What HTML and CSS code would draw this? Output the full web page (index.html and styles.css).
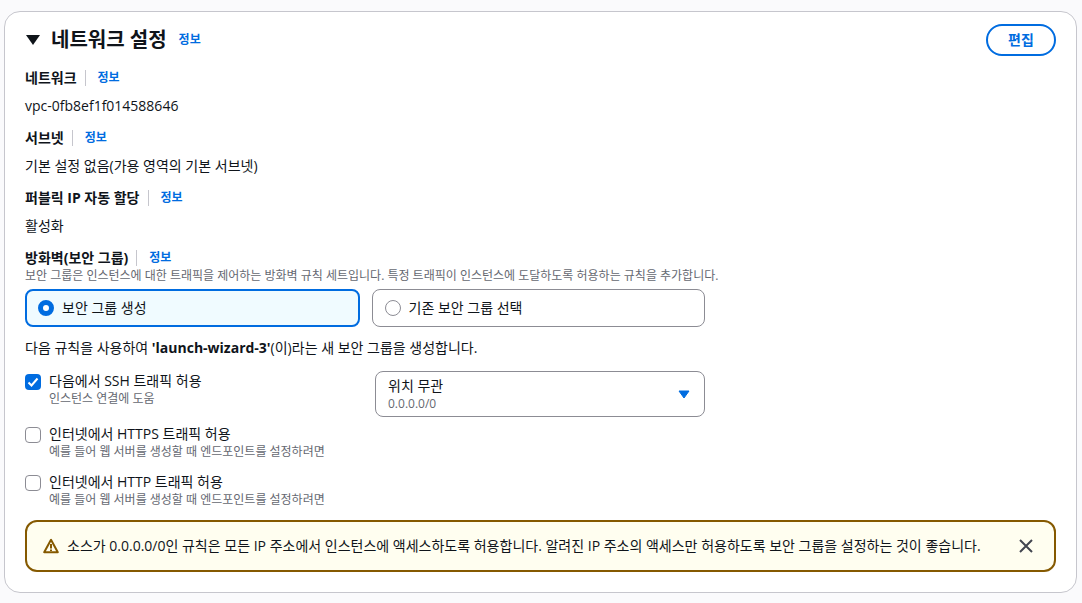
FILE: index.html
```html
<!DOCTYPE html>
<html lang="ko">
<head>
<meta charset="utf-8">
<title>네트워크 설정</title>
<link rel="stylesheet" href="styles.css">
</head>
<body>
<section class="card">
  <header class="head">
    <svg class="caret" width="14" height="10" viewBox="0 0 14 10"><path d="M0 0h14L7 10z" fill="#0f141a"/></svg>
    <h2 class="title">네트워크 설정</h2>
    <a class="info title-info">정보</a>
    <button class="edit">편집</button>
  </header>
  <div class="field">
    <div class="label"><b>네트워크</b><a class="info">정보</a></div>
    <div class="value">vpc-0fb8ef1f014588646</div>
  </div>
  <div class="field">
    <div class="label"><b>서브넷</b><a class="info">정보</a></div>
    <div class="value">기본 설정 없음(가용 영역의 기본 서브넷)</div>
  </div>
  <div class="field">
    <div class="label"><b>퍼블릭 IP 자동 할당</b><a class="info">정보</a></div>
    <div class="value">활성화</div>
  </div>
  <div class="label"><b>방화벽(보안 그룹)</b><a class="info">정보</a></div>
  <p class="desc">보안 그룹은 인스턴스에 대한 트래픽을 제어하는 방화벽 규칙 세트입니다. 특정 트래픽이 인스턴스에 도달하도록 허용하는 규칙을 추가합니다.</p>
  <div class="tiles">
    <div class="tile on"><span class="radio on"></span>보안 그룹 생성</div>
    <div class="tile"><span class="radio"></span>기존 보안 그룹 선택</div>
  </div>
  <p class="rule">다음 규칙을 사용하여 <b>'launch-wizard-3'</b>(이)라는 새 보안 그룹을 생성합니다.</p>
  <div class="ssh-row">
    <div class="check-item">
      <span class="box on"><svg width="16" height="16" viewBox="0 0 16 16"><path d="M3.5 8.5 6.5 11.5 12.5 4.5" fill="none" stroke="#fff" stroke-width="2"/></svg></span>
      <div><div class="check-label">다음에서 SSH 트래픽 허용</div><div class="check-desc">인스턴스 연결에 도움</div></div>
    </div>
    <div class="select">
      <div><div class="sel-main">위치 무관</div><div class="sel-sub">0.0.0.0/0</div></div>
      <svg width="12" height="9" viewBox="0 0 12 9"><path d="M1 1h10L6 8z" fill="#006ce0" stroke="#006ce0"/></svg>
    </div>
  </div>
  <div class="check-item spaced">
    <span class="box"></span>
    <div><div class="check-label">인터넷에서 HTTPS 트래픽 허용</div><div class="check-desc">예를 들어 웹 서버를 생성할 때 엔드포인트를 설정하려면</div></div>
  </div>
  <div class="check-item spaced2">
    <span class="box"></span>
    <div><div class="check-label">인터넷에서 HTTP 트래픽 허용</div><div class="check-desc">예를 들어 웹 서버를 생성할 때 엔드포인트를 설정하려면</div></div>
  </div>
  <div class="alert">
    <svg class="warn" width="16" height="16" viewBox="0 0 16 16"><path d="M8 1.8 1.2 14.2h13.6z" fill="none" stroke="#855900" stroke-width="2" stroke-linejoin="round"/><path d="M8 6v4.5M8 11.5v1.5" stroke="#855900" stroke-width="2" fill="none"/></svg>
    <span class="alert-text">소스가 0.0.0.0/0인 규칙은 모든 IP 주소에서 인스턴스에 액세스하도록 허용합니다. 알려진 IP 주소의 액세스만 허용하도록 보안 그룹을 설정하는 것이 좋습니다.</span>
    <svg class="close" width="16" height="16" viewBox="0 0 16 16"><path d="M2 2 14 14M14 2 2 14" stroke="#424650" stroke-width="2" fill="none"/></svg>
  </div>
</section>
</body>
</html>
```
FILE: styles.css
```css
* { box-sizing: border-box; }
html, body { height: 100%; }
body {
  margin: 0;
  padding: 11px 5px 0 4px;
  background: #fafafc;
  color: #0f141a;
  font: 14px/20px "Open Sans", "Noto Sans CJK KR", sans-serif;
  overflow: hidden;
}
.card {
  height: 582px;
  padding: 12px 20px 0;
  background: #fff;
  border: 1px solid #c6c6cd;
  border-radius: 16px;
}
.head { display: flex; align-items: center; height: 32px; margin-bottom: 12px; }
.caret { margin-left: 1px; }
.title { margin: 0 0 0 11px; font-size: 20px; line-height: 28px; font-weight: 700; }
.info { color: #006ce0; font-size: 12px; font-weight: 700; }
.title-info { margin-left: 12px; }
.edit {
  margin-left: auto;
  margin-right: 0;
  width: 70px;
  height: 32px;
  padding: 0;
  background: #fff;
  border: 2px solid #006ce0;
  border-radius: 16px;
  color: #006ce0;
  font: 700 14px/20px "Open Sans", "Noto Sans CJK KR", sans-serif;
}
.field { margin-bottom: 12px; }
.label { display: flex; align-items: center; height: 20px; }
.label b { padding-right: 8px; margin-right: 12px; border-right: 1px solid #c6c6cd; line-height: 16px; font-size: 14px; }
.value { margin-top: 8px; }
.desc { margin: 0; color: #656871; font-size: 12px; line-height: 16px; }
.tiles { display: flex; gap: 12px; margin-top: 5px; width: 680px; }
.tile {
  display: flex;
  align-items: center;
  flex: 1;
  height: 38px;
  padding-left: 12px;
  border: 1px solid #8c8c94;
  border-radius: 8px;
}
.tile.on { background: #f0fbff; border: 2px solid #006ce0; padding-left: 11px; }
.radio {
  width: 16px;
  height: 16px;
  margin-right: 8px;
  border: 1px solid #8c8c94;
  border-radius: 50%;
  background: #fff;
}
.radio.on { border: 5px solid #006ce0; }
.rule { margin: 11px 0 13px; }
.ssh-row { display: flex; width: 680px; justify-content: space-between; }
.check-item { display: flex; gap: 8px; }
.box {
  flex: none;
  width: 16px;
  height: 16px;
  margin-top: 3px;
  background: #fff;
  border: 1px solid #8c8c94;
  border-radius: 4px;
}
.box.on { background: #006ce0; border: 0; }
.box svg { display: block; }
.check-item { padding-top: 0; }
.ssh-row .check-item { padding-top: 0; }
.check-label { line-height: 20px; }
.check-desc { color: #656871; font-size: 12px; line-height: 16px; }
.select {
  display: flex;
  align-items: center;
  justify-content: space-between;
  width: 330px;
  height: 46px;
  padding: 0 14px 0 12px;
  border: 1px solid #8c8c94;
  border-radius: 8px;
}
.sel-main { line-height: 20px; }
.sel-sub { color: #656871; font-size: 12px; line-height: 16px; }
.spaced { margin-top: 7px; }
.spaced2 { margin-top: 12px; }
.alert {
  display: flex;
  align-items: center;
  height: 52px;
  margin-top: 12px;
  padding: 0 16px;
  background: #fffef0;
  border: 2px solid #855900;
  border-radius: 12px;
}
.warn { flex: none; margin-right: 8px; }
.alert-text { flex: 1; white-space: nowrap; }
.close { flex: none; margin-left: 8px; margin-right: 4px; }
```
